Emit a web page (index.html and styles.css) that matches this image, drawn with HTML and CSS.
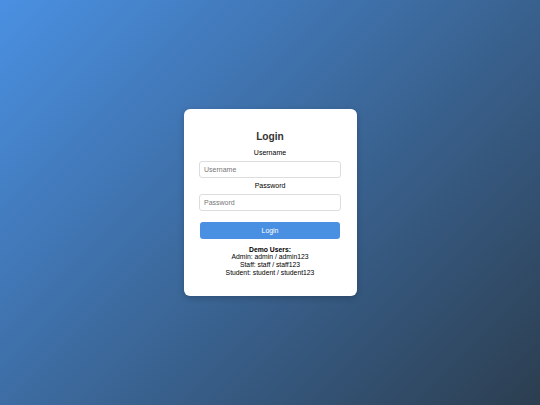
FILE: index.html
```html
<!DOCTYPE html>
<html lang="en">
<head>
<meta charset="utf-8">
<title>Login</title>
<link rel="stylesheet" href="styles.css">
</head>
<body>
<div class="card">
  <h2 class="title">Login</h2>
  <form class="form">
    <label class="label" for="u">Username</label>
    <input class="input" id="u" type="text" placeholder="Username">
    <label class="label" for="p">Password</label>
    <input class="input" id="p" type="password" placeholder="Password">
    <button class="btn" type="button">Login</button>
  </form>
  <div class="demo">
    <strong>Demo Users:</strong><br>
    Admin: admin / admin123<br>
    Staff: staff / staff123<br>
    Student: student / student123
  </div>
</div>
</body>
</html>
```
FILE: styles.css
```css
html, body {
  margin: 0;
  height: 100%;
}
body {
  font-family: "Liberation Sans", Arial, sans-serif;
  background: linear-gradient(135deg, #4a90e2 0%, #2c3e50 100%);
  display: flex;
  align-items: center;
  justify-content: center;
}
.card {
  width: 173px;
  box-sizing: border-box;
  padding: 16px 16px 18px;
  background: #fff;
  border-radius: 6px;
  box-shadow: 0 2px 6px rgba(0, 0, 0, 0.2);
  text-align: center;
}
.title {
  margin: 2px 0 1px;
  font-size: 10.2px;
  line-height: 20px;
  font-weight: bold;
  color: #333;
}
.form {
  display: flex;
  flex-direction: column;
}
.label {
  font-size: 7px;
  line-height: 10px;
  color: #000;
  margin-bottom: 3px;
}
.input {
  box-sizing: border-box;
  width: 142px;
  height: 17px;
  margin: 0 0 3px -0.5px;
  padding: 0 4px;
  border: 1px solid #ddd;
  border-radius: 3px;
  font-family: inherit;
  font-size: 7px;
  color: #333;
  outline: none;
}
.input::placeholder {
  color: #777;
}
.btn {
  margin-top: 8px;
  height: 17px;
  width: 140px;
  align-self: center;
  border: none;
  border-radius: 3px;
  background: #4a90e2;
  color: #fff;
  font-family: inherit;
  font-size: 6.9px;
  padding: 0;
}
.demo {
  margin-top: 7px;
  margin-bottom: 2px;
  font-size: 6.8px;
  line-height: 7.7px;
  color: #000;
}
.demo strong {
  font-weight: bold;
}
```
